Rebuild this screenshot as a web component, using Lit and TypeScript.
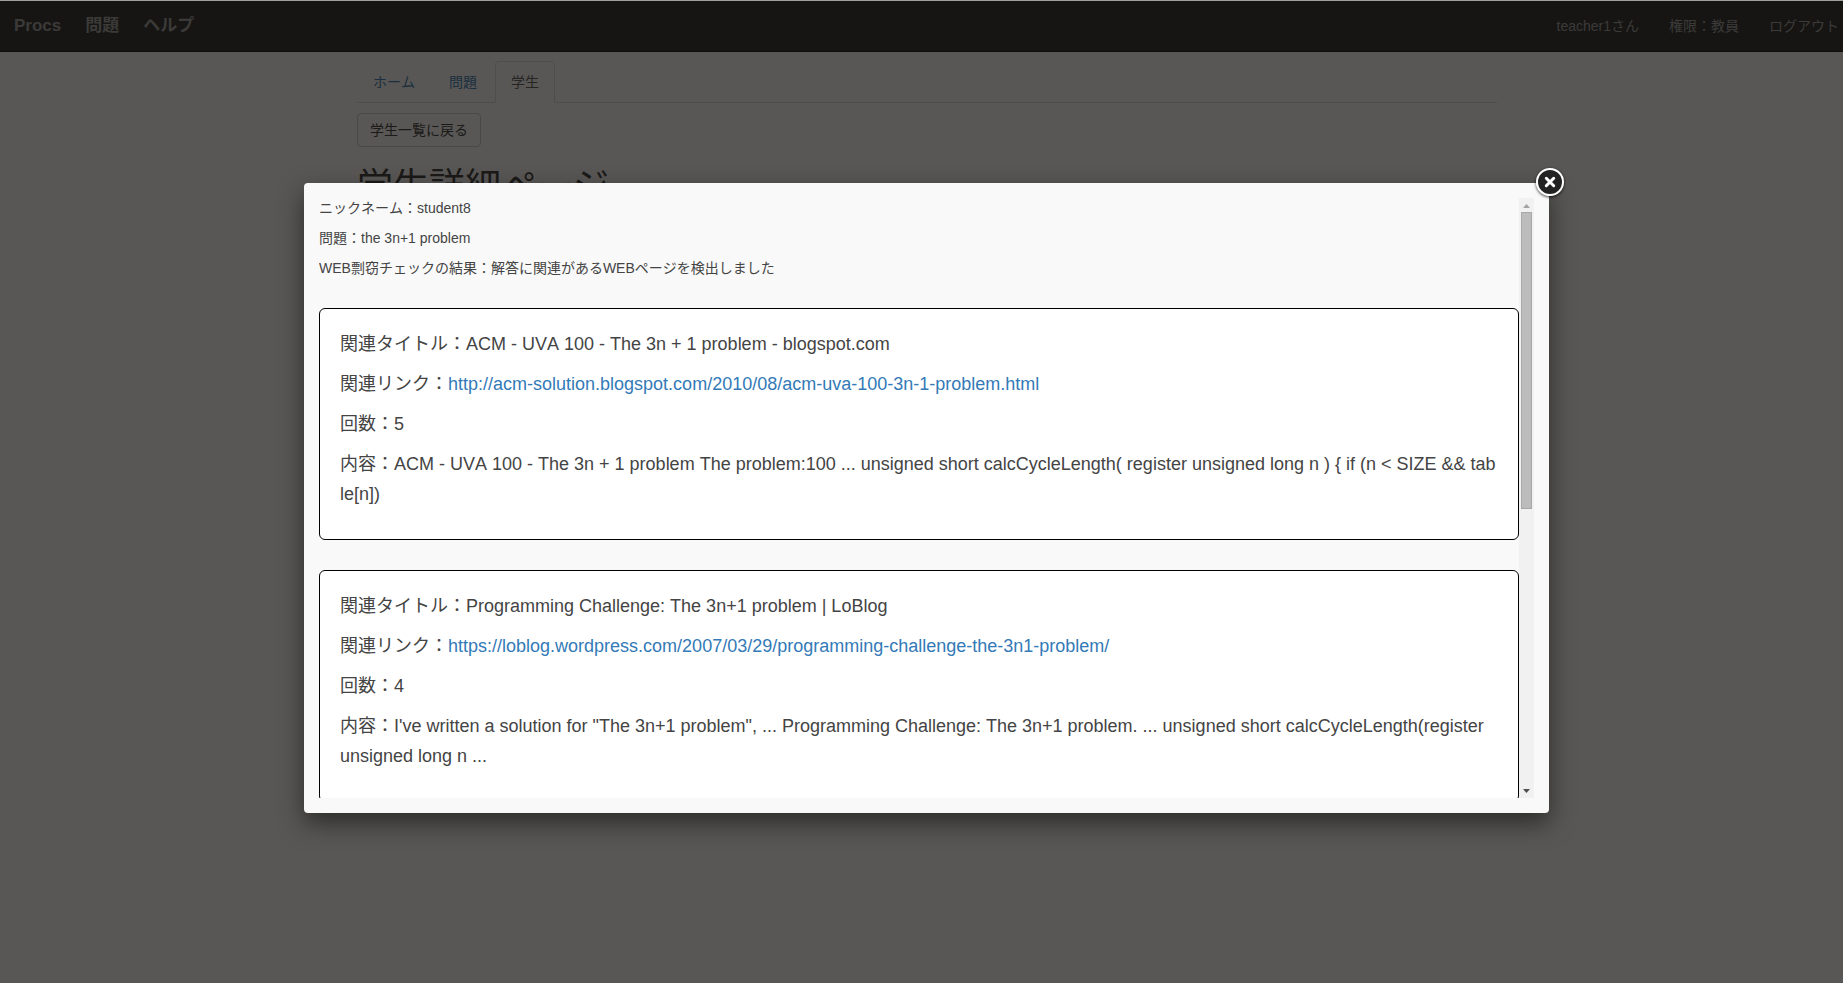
import { LitElement, html, css } from "lit";
import { customElement, property, state } from "lit/decorators.js";

interface RelatedPage {
  title: string;
  url: string;
  count: number;
  excerpt: string;
}

const RELATED: RelatedPage[] = [
  {
    title: "ACM - UVA 100 - The 3n + 1 problem - blogspot.com",
    url: "http://acm-solution.blogspot.com/2010/08/acm-uva-100-3n-1-problem.html",
    count: 5,
    excerpt:
      "ACM - UVA 100 - The 3n + 1 problem The problem:100 ... unsigned short calcCycleLength( register unsigned long n ) { if (n < SIZE && table[n])",
  },
  {
    title: "Programming Challenge: The 3n+1 problem | LoBlog",
    url: "https://loblog.wordpress.com/2007/03/29/programming-challenge-the-3n1-problem/",
    count: 4,
    excerpt:
      "I've written a solution for \"The 3n+1 problem\", ... Programming Challenge: The 3n+1 problem. ... unsigned short calcCycleLength(register unsigned long n ...",
  },
];

@customElement("related-card")
export class RelatedCard extends LitElement {
  @property({ attribute: false }) page!: RelatedPage;

  static styles = css`
    :host {
      display: block;
    }
    .card {
      padding: 20px;
      border: 1px solid #000;
      border-radius: 6px;
      background: #fff;
      font-size: 18px;
      line-height: 30px;
      word-break: break-all;
    }
    .row {
      margin: 0 0 10px;
    }
    .link {
      color: #337ab7;
      text-decoration: none;
    }
    .link:hover {
      text-decoration: underline;
    }
  `;

  render() {
    const p = this.page;
    return html`<article class="card">
      <p class="row">${`関連タイトル：${p.title}`}</p>
      <p class="row">関連リンク：<a class="link" href=${p.url}>${p.url}</a></p>
      <p class="row">${`回数：${p.count}`}</p>
      <p class="row">${`内容：${p.excerpt}`}</p>
    </article>`;
  }
}

@customElement("result-dialog")
export class ResultDialog extends LitElement {
  static styles = css`
    :host {
      display: block;
    }
    .skin {
      position: relative;
      padding: 15px;
      border-radius: 4px;
      background: #f9f9f9;
      color: #444;
      box-shadow: 0 10px 25px rgba(0, 0, 0, 0.5);
      font-size: 14px;
      line-height: 20px;
    }
    .inner {
      display: grid;
      grid-template-columns: minmax(0, 1fr) 15px;
      height: 600px;
    }
    .content {
      overflow-y: auto;
      scrollbar-width: none;
      min-height: 0;
    }
    .info {
      margin: 0 0 10px;
    }
    .cards {
      display: grid;
      gap: 30px;
      padding: 20px 0 160px;
    }
    .bar {
      display: grid;
      grid-template-rows: 14px 1fr 14px;
      background: #f1f1f1;
    }
    .step {
      display: grid;
      place-items: center;
      padding: 0;
      border: 0;
      background: transparent;
      color: #505050;
    }
    .step.idle {
      padding-top: 2px;
      color: #a3a3a3;
    }
    .track {
      padding: 0 2px;
    }
    .thumb {
      box-sizing: border-box;
      height: 52%;
      border: 1px solid #a8a8a8;
      background: #bcbcbc;
    }
    .close {
      position: absolute;
      top: -15px;
      right: -15px;
      width: 28px;
      height: 28px;
      padding: 0;
      border: 0;
      border-radius: 50%;
      background: transparent;
      box-shadow: 0 1px 3px rgba(0, 0, 0, 0.8);
      cursor: pointer;
    }
    .icon {
      display: block;
    }
  `;

  private scroll(step: number) {
    this.renderRoot.querySelector(".content")?.scrollBy({ top: step });
  }

  private close() {
    this.dispatchEvent(new CustomEvent("dialog-close"));
  }

  render() {
    return html`<section class="skin" role="dialog" aria-label="WEB剽窃チェックの結果">
      <div class="inner">
        <div class="content">
          <p class="info">ニックネーム：student8</p>
          <p class="info">問題：the 3n+1 problem</p>
          <p class="info">WEB剽窃チェックの結果：解答に関連があるWEBページを検出しました</p>
          <div class="cards">
            ${RELATED.map((p) => html`<related-card .page=${p}></related-card>`)}
          </div>
        </div>
        <div class="bar">
          <button class="step idle" aria-label="上へ" @click=${() => this.scroll(-40)}>
            <svg class="icon" width="7" height="4" viewBox="0 0 7 4"><path d="M0 4 3.5 0 7 4z" fill="currentColor" /></svg>
          </button>
          <div class="track"><div class="thumb"></div></div>
          <button class="step" aria-label="下へ" @click=${() => this.scroll(40)}>
            <svg class="icon" width="7" height="4" viewBox="0 0 7 4"><path d="M0 0h7L3.5 4z" fill="currentColor" /></svg>
          </button>
        </div>
      </div>
      <button class="close" aria-label="閉じる" @click=${this.close}>
        <svg class="icon" width="28" height="28" viewBox="0 0 28 28">
          <circle cx="14" cy="14" r="13" fill="#222" stroke="#fff" stroke-width="2" />
          <path d="m10.3 10.3 7.4 7.4m0-7.4-7.4 7.4" stroke="#fff" stroke-width="3" stroke-linecap="round" />
        </svg>
      </button>
    </section>`;
  }
}

@customElement("app-root")
export class AppRoot extends LitElement {
  @state() private open = true;

  static styles = css`
    :host {
      display: block;
      position: relative;
      min-height: 100vh;
      box-sizing: border-box;
      overflow: hidden;
      border-top: 1px solid #9fa19d;
      background: #fff;
      color: #333;
      font-family: "Liberation Sans", "Noto Sans CJK JP", sans-serif;
      font-size: 14px;
      line-height: 20px;
      font-kerning: none;
    }
    /* The page runs slightly past the right edge of the window. */
    .page {
      width: calc(100% + 11px);
    }
    .navbar {
      display: flex;
      justify-content: space-between;
      padding: 15px 15px 15px 14px;
      border-bottom: 1px solid #080808;
      background: #222;
    }
    .group {
      display: flex;
      gap: 30px;
    }
    .group.brand {
      gap: 24px;
      font-size: 17px;
      font-weight: bold;
    }
    .navlink {
      color: #9d9d9d;
      text-decoration: none;
      white-space: nowrap;
    }
    .container {
      max-width: 1140px;
      margin: 0 auto;
      padding-top: 9px;
    }
    .tabs {
      display: flex;
      gap: 2px;
      border-bottom: 1px solid #ddd;
    }
    .tab {
      margin-bottom: -1px;
      padding: 10px 15px;
      border: 1px solid transparent;
      border-radius: 4px 4px 0 0;
      color: #337ab7;
      text-decoration: none;
    }
    .tab.active {
      border-color: #ddd #ddd #fff;
      background: #fff;
      color: #555;
    }
    .back {
      display: block;
      margin: 10px 0 20px;
      padding: 6px 12px;
      border: 1px solid #ccc;
      border-radius: 4px;
      background: #fff;
      color: #333;
      font: inherit;
      font-kerning: none;
    }
    .title {
      margin: 0;
      font-size: 36px;
      line-height: 40px;
      font-weight: 400;
    }
    .overlay {
      position: absolute;
      top: 0;
      bottom: 0;
      left: 0;
      box-sizing: border-box;
      width: calc(100% + 10px);
      padding: 182px 304px 0;
      background: rgba(17, 15, 13, 0.7);
    }
  `;

  render() {
    return html`
      <div class="page">
        <nav class="navbar">
          <div class="group brand">
            <a class="navlink" href="#">Procs</a>
            <a class="navlink" href="#">問題</a>
            <a class="navlink" href="#">ヘルプ</a>
          </div>
          <div class="group">
            <a class="navlink" href="#">teacher1さん</a>
            <a class="navlink" href="#">権限：教員</a>
            <a class="navlink" href="#">ログアウト</a>
          </div>
        </nav>
        <main class="container">
          <div class="tabs">
            <a class="tab" href="#">ホーム</a>
            <a class="tab" href="#">問題</a>
            <a class="tab active" href="#">学生</a>
          </div>
          <button class="back">学生一覧に戻る</button>
          <h1 class="title">学生詳細ページ</h1>
        </main>
      </div>
      ${this.open
        ? html`<div class="overlay">
            <result-dialog @dialog-close=${() => (this.open = false)}></result-dialog>
          </div>`
        : null}
    `;
  }
}
